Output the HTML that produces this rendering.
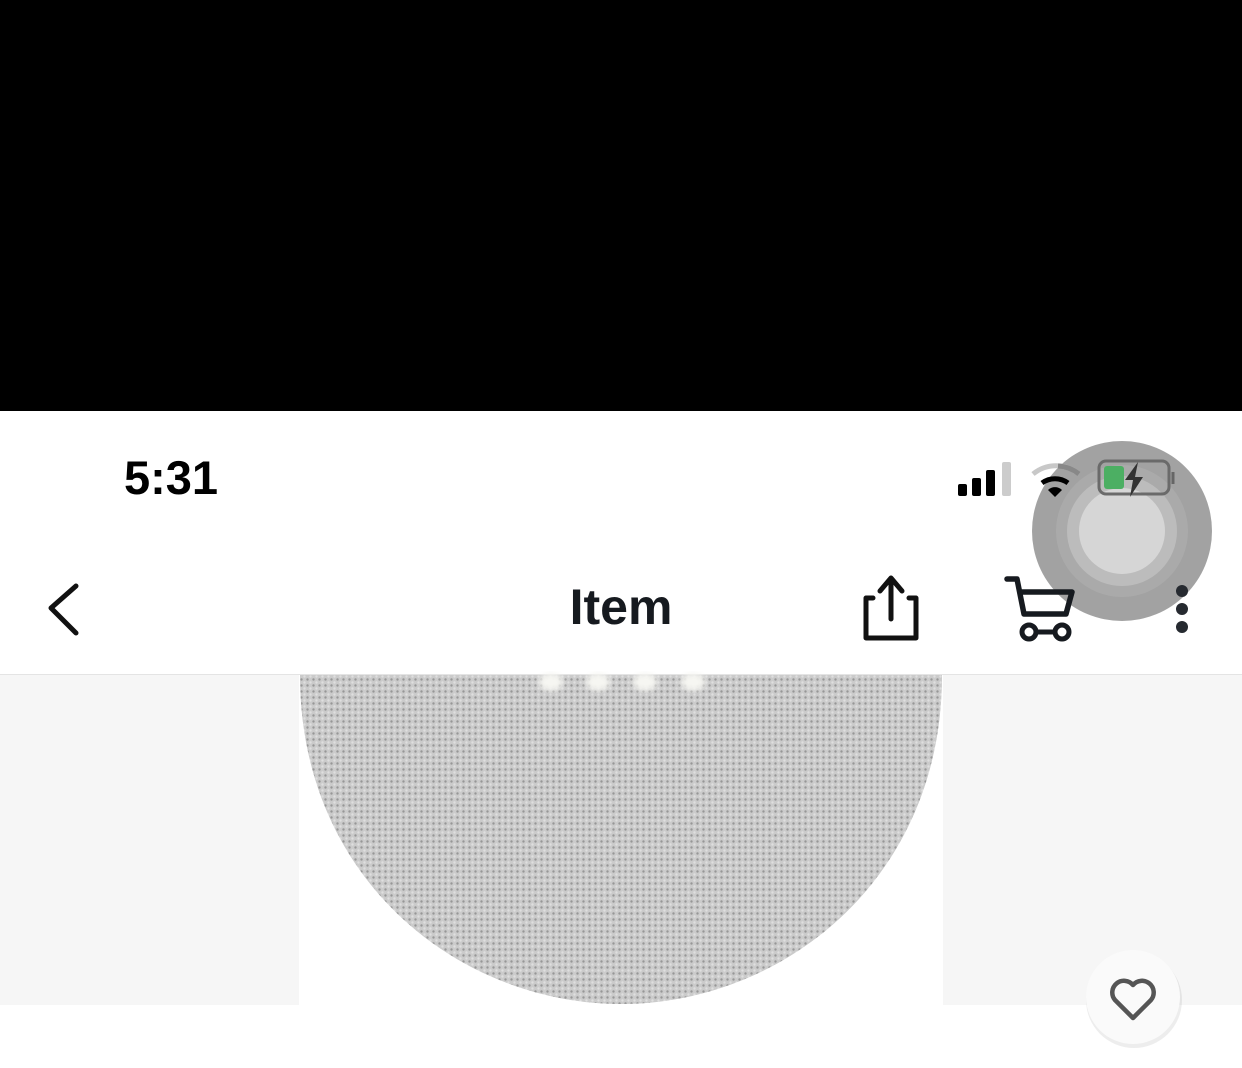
<!DOCTYPE html>
<html><head><meta charset="utf-8"><style>
html,body{margin:0;padding:0;width:1242px;height:1068px;overflow:hidden;background:#fff;font-family:"Liberation Sans",sans-serif;}
.abs{position:absolute}
</style></head><body>
<div class="abs" style="left:0;top:0;width:1242px;height:411px;background:#000"></div>
<div class="abs" style="left:124px;top:450px;font-size:47px;font-weight:bold;color:#000;letter-spacing:0px">5:31</div>
<svg class="abs" style="left:0;top:0" width="1242" height="1068">
  <defs>
    <pattern id="dots" width="6" height="6" patternUnits="userSpaceOnUse">
      <rect width="6" height="6" fill="#c9c9c9"/>
      <circle cx="1.5" cy="1.5" r="1.2" fill="#7f7f7f"/>
      <circle cx="4.5" cy="4.5" r="1.2" fill="#e6e6e6"/>
    </pattern>
    <filter id="bl"><feGaussianBlur stdDeviation="3"/></filter>
  </defs>
  <!-- nav bg -->
  <rect x="0" y="675" width="1242" height="330" fill="#f6f6f6"/>
  <rect x="0" y="674" width="1242" height="1" fill="#e4e4e4"/>
  <rect x="299" y="675" width="644" height="330" fill="#fff"/>
  <path d="M300 675 C300 880 460 1004 621 1004 C782 1004 942 880 942 675 Z" fill="url(#dots)"/>
  <path d="M300 675 C300 880 460 1004 621 1004 C782 1004 942 880 942 675 Z" fill="#cfcfcf" opacity="0.3"/>
  <g fill="#f6f6f2" filter="url(#bl)"><ellipse cx="551" cy="682" rx="12" ry="9"/><ellipse cx="598" cy="682" rx="12" ry="9"/><ellipse cx="645" cy="682" rx="12" ry="9"/><ellipse cx="693" cy="682" rx="12" ry="9"/></g>
  <!-- back -->
  <path d="M76 586 L51 608 L76 633" fill="none" stroke="#111" stroke-width="5" stroke-linecap="round" stroke-linejoin="round"/>
  <!-- share -->
  <path d="M873 598 H866 V638 H916 V598 H909 M891 619 V578 M880 591 L891 578 L902 591" fill="none" stroke="#111" stroke-width="5" stroke-linecap="round" stroke-linejoin="round"/>
  <!-- assistive touch -->
  <circle cx="1122" cy="531" r="90" fill="#9a9a9a" opacity="0.92"/>
  <circle cx="1122" cy="531" r="66" fill="#aaa"/>
  <circle cx="1122" cy="531" r="55" fill="#bcbcbc"/>
  <circle cx="1122" cy="531" r="43" fill="#d6d6d6"/>
  <!-- signal -->
  <rect x="958" y="484" width="9" height="12" rx="2" fill="#000"/>
  <rect x="972" y="478" width="9" height="18" rx="2" fill="#000"/>
  <rect x="986" y="470" width="9" height="26" rx="2" fill="#000"/>
  <rect x="1002" y="462" width="9" height="34" rx="2" fill="#ccc"/>
  <!-- wifi -->
  <path d="M1033 474 A36 36 0 0 1 1079 474" fill="none" stroke="#c8c8c8" stroke-width="5"/>
  <path d="M1058 466 A36 36 0 0 1 1079 474" fill="none" stroke="#888" stroke-width="5"/>
  <path d="M1042 483 A22 22 0 0 1 1068 483" fill="none" stroke="#000" stroke-width="5"/>
  <path d="M1048 490 L1055 497 L1062 490 A10 10 0 0 0 1048 490 Z" fill="#000"/>
  <!-- battery -->
  <rect x="1099" y="461" width="70" height="33" rx="7" fill="none" stroke="#6a6a6a" stroke-width="3"/>
  <rect x="1104" y="466" width="20" height="23" rx="3" fill="#4caf63"/>
  <path d="M1173 472 V484" stroke="#666" stroke-width="3"/>
  <path d="M1138 462 L1125 480 H1133 L1130 497 L1143 477 H1135 Z" fill="#333"/>
  <!-- cart -->
  <path d="M1007 579 H1017 L1024 614 H1066 L1072 592 H1020" fill="none" stroke="#161a1f" stroke-width="5.5" stroke-linecap="round" stroke-linejoin="round"/>
  <circle cx="1029" cy="632" r="7" fill="none" stroke="#161a1f" stroke-width="5"/>
  <circle cx="1062" cy="632" r="7" fill="none" stroke="#161a1f" stroke-width="5"/>
  <path d="M1036 632 H1055" stroke="#161a1f" stroke-width="5"/>
  <!-- dots -->
  <circle cx="1182" cy="591" r="6" fill="#262a30"/><circle cx="1182" cy="609" r="6" fill="#262a30"/><circle cx="1182" cy="627" r="6" fill="#262a30"/>
  <!-- heart button -->
  <circle cx="1134" cy="1000" r="48" fill="#000" opacity="0.07"/>
  <circle cx="1133" cy="997" r="47" fill="#fafafa"/>
  <path d="M1133 1018 L1115 1000 A10 10 0 0 1 1133 985 A10 10 0 0 1 1151 1000 Z" fill="none" stroke="#555" stroke-width="4.5" stroke-linejoin="round"/>
</svg>
<div class="abs" style="left:0;width:1242px;top:578px;text-align:center;font-size:50px;font-weight:bold;color:#161a1f">Item</div>
</body></html>
